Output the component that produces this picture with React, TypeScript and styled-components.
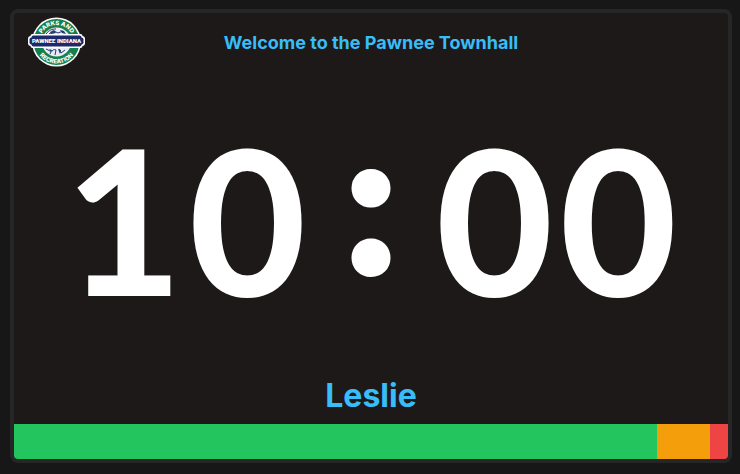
import React from 'react';
import styled, { createGlobalStyle } from 'styled-components';

const GlobalStyle = createGlobalStyle`
  * { box-sizing: border-box; }
  body {
    margin: 0;
    background: #171717;
    font-family: Inter, "Liberation Sans", sans-serif;
  }
`;

const Page = styled.main`
  display: flex;
  min-height: 100vh;
  padding: 9px 8px 11px 10px;
`;

const Panel = styled.section`
  flex: 1;
  display: flex;
  flex-direction: column;
  overflow: hidden;
  border: 4px solid #262626;
  border-radius: 8px;
  background: #1d1918;
`;

const Header = styled.header`
  display: grid;
  grid-template-columns: 58px 1fr 58px;
  align-items: center;
  padding: 4px 14px;
`;

const Title = styled.h1`
  margin: 0;
  padding-top: 2px;
  color: #38bdf8;
  font-size: 18px;
  font-weight: 700;
  line-height: 24px;
  text-align: center;
`;

const Clock = styled.div`
  flex: 1;
  display: grid;
  grid-template-columns: repeat(5, 1fr);
  align-items: center;
  padding: 0 48px 4px;
  color: #fff;
  font-family: Lato, "Liberation Sans", sans-serif;
  font-size: 200px;
  font-weight: 700;
  line-height: 236px;
  text-align: center;
`;

const Digit = styled.span`
  -webkit-text-stroke: 2px #fff;
`;

const Separator = styled.span`
  padding-bottom: 34px;
  font-family: Inter, "Liberation Sans", sans-serif;
  font-weight: 800;
  -webkit-text-stroke: 2px #fff;
`;

const Speaker = styled.h2`
  margin: 0;
  padding: 8px 0;
  color: #38bdf8;
  font-size: 32px;
  font-weight: 700;
  line-height: 40px;
  text-align: center;
`;

const Progress = styled.div`
  display: flex;
  height: 35px;
`;

const Segment = styled.div<{ $share: number; $color: string }>`
  flex: ${({ $share }) => $share} 1 0;
  background: ${({ $color }) => $color};
`;

const LogoMark = styled.svg`
  display: block;
  width: 58px;
  height: 50px;
  font-family: Inter, "Liberation Sans", sans-serif;
`;

const Logo = () => (
  <LogoMark viewBox="0 0 58 50" role="img" aria-label="Pawnee Indiana Parks and Recreation">
    <defs>
      <path id="arc-top" d="M11.5 25a17 17 0 0 1 34 0" />
      <path id="arc-bottom" d="M7 25a21.500 21.500 0 0 0 43 0" />
    </defs>
    <circle cx="28.500" cy="25" r="24.500" fill="#fff" />
    <circle cx="28.500" cy="25" r="23" fill="#15804f" />
    <circle cx="28.500" cy="25" r="14.500" fill="#e9edf5" />
    <g fill="none" stroke="#26386f" strokeWidth="1">
      <path d="M18 17c3-4 6-5 10-5M21 17l5-3 4 2 5-2" />
      <path d="M18 32c3 1 4 3 6 2s1-2 4-1l-1 5M31 32l2 4 4-3M23 35l-1 2" />
    </g>
    <g fill="#26386f">
      <path d="M22 15l4-2 2 3-5 1zM32 13l4 1 2 3-4-1zM30 32l3 1-1 4zM21 32l3 1-1 2z" />
    </g>
    <g fill="#fff" fontSize="6" fontWeight="800" textAnchor="middle">
      <text><textPath href="#arc-top" startOffset="50%">PARKS AND</textPath></text>
      <text><textPath href="#arc-bottom" startOffset="50%">RECREATION</textPath></text>
    </g>
    <rect x="2.500" y="17" width="52" height="14" rx="2" fill="#fff" />
    <rect x="0" y="19" width="57" height="10" rx="3" fill="#fff" />
    <rect x="3.500" y="18.500" width="50" height="11" rx="2" fill="#1d2a6b" />
    <rect x="1.500" y="20.500" width="54" height="7" rx="2" fill="#1d2a6b" />
    <text
      x="28.500"
      y="26"
      fill="#fff"
      fontFamily="Roboto, sans-serif"
      fontSize="6"
      fontWeight="900"
      textAnchor="middle"
    >
      PAWNEE INDIANA
    </text>
  </LogoMark>
);

const segments = [
  { name: 'normal', share: 90, color: '#22c55e' },
  { name: 'warning', share: 7.5, color: '#f59e0b' },
  { name: 'danger', share: 2.5, color: '#ef4444' },
];

export default function App() {
  const time = '10:00';
  return (
    <>
      <GlobalStyle />
      <Page>
        <Panel>
          <Header>
            <Logo />
            <Title>Welcome to the Pawnee Townhall</Title>
          </Header>
          <Clock role="timer">
            {time.split('').map((char, i) =>
              char === ':' ? <Separator key={i}>{char}</Separator> : <Digit key={i}>{char}</Digit>,
            )}
          </Clock>
          <Speaker>Leslie</Speaker>
          <Progress>
            {segments.map(({ name, share, color }) => (
              <Segment key={name} $share={share} $color={color} />
            ))}
          </Progress>
        </Panel>
      </Page>
    </>
  );
}
